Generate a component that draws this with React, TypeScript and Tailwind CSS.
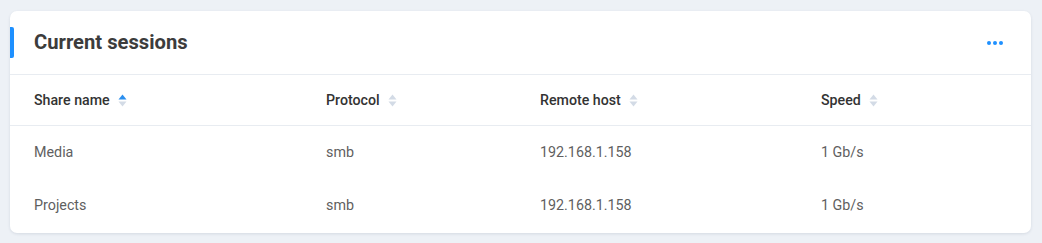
const rows = [
  { name: "Media", protocol: "smb", host: "192.168.1.158", speed: "1 Gb/s" },
  { name: "Projects", protocol: "smb", host: "192.168.1.158", speed: "1 Gb/s" },
];

const SortIcon = ({ active }: { active?: boolean }) => (
  <svg width="9" height="13" viewBox="0 0 9 13" className="ml-2">
    <path d="M4.5 0.5L8.5 5.5H0.5Z" fill={active ? "#2b8fef" : "#d3dbe6"} />
    <path d="M4.5 12.5L8.5 7.5H0.5Z" fill="#d3dbe6" />
  </svg>
);

const columns = [
  { label: "Share name", active: true },
  { label: "Protocol" },
  { label: "Remote host" },
  { label: "Speed" },
];

export default function App() {
  return (
    <div
      className="w-[1042px] h-[243px] bg-[#edf1f6] pt-[11px] pl-[10px] pr-[11px]"
      style={{ fontFamily: "Roboto, 'Liberation Sans', sans-serif" }}
    >
      <div className="bg-white rounded-[7px] shadow-[0_1px_3px_rgba(40,60,90,0.12)] h-[222px]">
        {/* card header */}
        <div className="relative flex items-center justify-between h-[64px] pl-6 pr-[28px] border-b border-[#e8ecf1]">
          <div className="absolute left-0 top-[16px] w-[4px] h-[31px] bg-[#1e90ff] rounded-r-[2px]" />
          <h2 className="text-[20.2px] font-bold text-[#3c3c3c]">Current sessions</h2>
          <div className="flex gap-[2px]">
            <span className="w-[4px] h-[4px] rounded-full bg-[#1e90ff]" />
            <span className="w-[4px] h-[4px] rounded-full bg-[#1e90ff]" />
            <span className="w-[4px] h-[4px] rounded-full bg-[#1e90ff]" />
          </div>
        </div>

        {/* table head */}
        <div className="grid grid-cols-[292px_214px_281px_1fr] px-6 h-[51px] pt-[1px] items-center border-b border-[#e8ecf1]">
          {columns.map((c) => (
            <div key={c.label} className="flex items-center text-[14.2px] font-medium text-[#333]">
              {c.label}
              <SortIcon active={c.active} />
            </div>
          ))}
        </div>

        {/* rows */}
        {rows.map((r) => (
          <div
            key={r.name}
            className="grid grid-cols-[292px_214px_281px_1fr] px-6 h-[53px] pt-[1px] items-center text-[14.3px] text-[#5f5f5f]"
          >
            <div>{r.name}</div>
            <div>{r.protocol}</div>
            <div>{r.host}</div>
            <div>{r.speed}</div>
          </div>
        ))}
      </div>
    </div>
  );
}
